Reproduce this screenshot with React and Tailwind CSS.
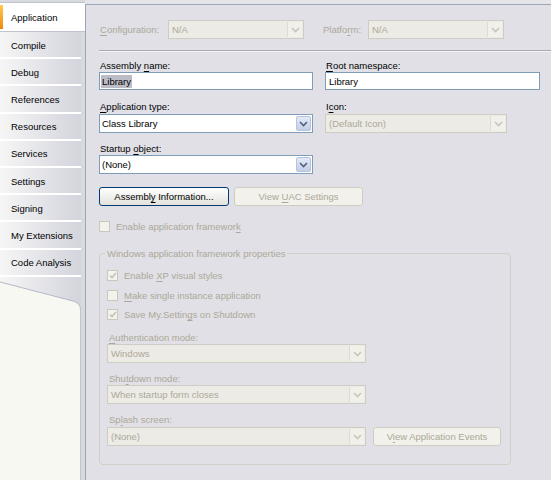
import React from 'react'

const tabs = ['Compile', 'Debug', 'References', 'Resources', 'Services', 'Settings', 'Signing', 'My Extensions', 'Code Analysis']

// text with one underlined mnemonic letter
function Mn({ text, at }) {
  if (at == null) return <>{text}</>
  return (
    <>
      {text.slice(0, at)}
      <span className="underline underline-offset-[2px]">{text[at]}</span>
      {text.slice(at + 1)}
    </>
  )
}

function Chevron({ color }) {
  return (
    <svg width="9" height="6" viewBox="0 0 9 6">
      <polyline points="1,1 4.5,4.5 8,1" fill="none" stroke={color} strokeWidth="1.6" />
    </svg>
  )
}

function Combo({ value, disabled, className = '' }) {
  if (disabled) {
    return (
      <div className={`h-[19px] flex items-center border border-[#cfcdc2] bg-[#ecebe5] ${className}`}>
        <span className="flex-1 pl-[3px] text-[#aca899] truncate">{value}</span>
        <div className="w-[15px] h-[15px] mr-px flex items-center justify-center bg-[#f1f0ea] border-l border-[#dddcd3]">
          <Chevron color="#c8c6bb" />
        </div>
      </div>
    )
  }
  return (
    <div className={`h-[19px] flex items-center border border-[#7f9db9] bg-white ${className}`}>
      <span className="flex-1 pl-[2px] text-black truncate">{value}</span>
      <div className="w-[15px] h-[15px] mr-px flex items-center justify-center rounded-[2px] border border-[#b5c3de] bg-gradient-to-b from-[#e3e9f6] to-[#c4cfe4]">
        <Chevron color="#4d6185" />
      </div>
    </div>
  )
}

function TextBox({ value, selected, className = '' }) {
  return (
    <div className={`h-[18px] flex items-center border border-[#7f9db9] bg-white pl-px ${className}`}>
      <span className={selected ? 'bg-[#bcbcc6] px-px py-px' : 'pl-[2px]'}>{value}</span>
    </div>
  )
}

function Button({ children, disabled, className = '' }) {
  if (disabled) {
    return (
      <div className={`h-[19px] flex items-center justify-center rounded-[3px] border border-[#cfcdc2] bg-[#f2f1eb] text-[#aca899] ${className}`}>
        <span>{children}</span>
      </div>
    )
  }
  return (
    <div className={`h-[19px] flex items-center justify-center rounded-[3px] border border-[#003c74] bg-gradient-to-b from-white to-[#e3e2dc] text-black ${className}`}>
      <span>{children}</span>
    </div>
  )
}

function Check({ checked, children, className = '' }) {
  return (
    <div className={`flex items-center gap-[6px] text-[#aca899] ${className}`}>
      <div className="w-[11px] h-[11px] border border-[#cac8bb] bg-[#f3f2ec] flex items-center justify-center">
        {checked && (
          <svg width="8" height="7" viewBox="0 0 8 7">
            <polyline points="1,3.5 3,5.5 7,1" fill="none" stroke="#c4c2b6" strokeWidth="1.6" />
          </svg>
        )}
      </div>
      <span>{children}</span>
    </div>
  )
}

export default function App() {
  return (
    <div className="w-[551px] h-[480px] flex overflow-hidden bg-[#e4e4e9] text-[9.5px] leading-[11px] text-black whitespace-nowrap font-['Liberation_Sans',Arial,sans-serif]">
      {/* left tab strip */}
      <div className="w-[85px] flex flex-col pt-[2px] bg-[#d9d9e0]">
        <div className="h-[30px] w-[85px] flex items-center bg-white border-t border-b border-[#c0c4cc] relative">
          <div className="absolute left-0 top-[2px] bottom-[2px] w-[3px] bg-gradient-to-b from-[#ffc94d] to-[#ee8a00]" />
          <span className="pl-[11px]">Application</span>
        </div>
        {tabs.map((t) => (
          <div
            key={t}
            className="h-[27.2px] w-[81px] flex items-center border-b-2 border-white bg-gradient-to-r from-[#f6f6f6] to-[#d3d4dc]"
          >
            <span className="pl-[11px] pt-px">{t}</span>
          </div>
        ))}
        <svg width="81" height="32" viewBox="0 0 81 32" className="block shrink-0">
          <defs>
            <linearGradient id="tabg" x1="0" x2="1" y1="0" y2="0">
              <stop offset="0" stopColor="#f6f6f6" />
              <stop offset="1" stopColor="#d3d4dc" />
            </linearGradient>
          </defs>
          <rect x="0" y="0" width="81" height="32" fill="#f8f8f3" />
          <path d="M0 0 H81 V32 Q80 26 73 24 L0 5 Z" fill="url(#tabg)" />
          <path d="M0 5 L73 24 Q80 26 80.5 32" fill="none" stroke="#b4b8c6" strokeWidth="1" />
        </svg>
        <div className="flex-1 w-[81px] bg-[#f8f8f3] border-r border-[#c4c4c8]" />
      </div>

      {/* property page */}
      <div className="flex-1 mt-[4px] border-t border-l border-[#9aa7ba] bg-[#e1e0e6] pl-[13px] flex flex-col">
        <div className="flex items-center mt-[15px] text-[#aca899]">
          <span className="w-[69px] pl-px"><Mn text="Configuration:" at={0} /></span>
          <Combo value="N/A" disabled className="w-[136px]" />
          <span className="ml-[18px] w-[46px] pl-px"><Mn text="Platform:" at={6} /></span>
          <Combo value="N/A" disabled className="w-[136px]" />
        </div>

        <div className="mt-[11px] h-[2px] border-t border-[#a9a9b3] border-b border-b-[#f4f4f6]" />

        <div className="flex mt-[8px] gap-[12px]">
          <div className="w-[214px] flex flex-col">
            <span className="pl-px mb-px">Assembly <Mn text="name:" at={0} /></span>
            <TextBox value="Library" selected />
          </div>
          <div className="w-[215px] flex flex-col">
            <span className="pl-px mb-px"><Mn text="Root namespace:" at={0} /></span>
            <TextBox value="Library" />
          </div>
        </div>

        <div className="flex mt-[11px] gap-[12px]">
          <div className="w-[214px] flex flex-col">
            <span className="pl-px mb-[2px]"><Mn text="Application type:" at={0} /></span>
            <Combo value="Class Library" />
          </div>
          <div className="w-[182px] flex flex-col">
            <span className="pl-px mb-[2px]"><Mn text="Icon:" at={1} /></span>
            <Combo value="(Default Icon)" disabled />
          </div>
        </div>

        <div className="w-[214px] flex flex-col mt-[10px]">
          <span className="pl-px mb-px">Startup <Mn text="object:" at={0} /></span>
          <Combo value="(None)" />
        </div>

        <div className="flex mt-[13px] gap-[5px]">
          <Button className="w-[130px]">Assembl<Mn text="y Information..." at={0} /></Button>
          <Button disabled className="w-[129px]">View <Mn text="UAC Settings" at={0} /></Button>
        </div>

        <Check className="mt-[15px]"><Mn text="Enable application framework" at={27} /></Check>

        <div className="relative mt-[21px] w-[412px] h-[212px] border border-[#d0d0c8] rounded-[4px] pl-[7px] pt-[16px] flex flex-col">
          <span className="absolute -top-[6px] left-[5px] px-[2px] bg-[#e1e0e6] text-[#aca899]">
            Windows application framework properties
          </span>
          <Check checked><Mn text="Enable XP visual styles" at={7} /></Check>
          <Check className="mt-[9px]"><Mn text="Make single instance application" at={0} /></Check>
          <Check checked className="mt-[8px]">Save My.Settin<Mn text="gs on Shutdown" at={0} /></Check>

          <span className="mt-[12px] mb-px pl-[2px] text-[#aca899]"><Mn text="Authentication mode:" at={0} /></span>
          <Combo value="Windows" disabled className="w-[259px]" />

          <span className="mt-[10px] mb-px pl-[2px] text-[#aca899]"><Mn text="Shutdown mode:" at={3} /></span>
          <Combo value="When startup form closes" disabled className="w-[259px]" />

          <span className="mt-[10px] mb-[2px] pl-[2px] text-[#aca899]"><Mn text="Splash screen:" at={2} /></span>
          <div className="flex gap-[7px]">
            <Combo value="(None)" disabled className="w-[259px]" />
            <Button disabled className="w-[128px]">V<Mn text="iew Application Events" at={0} /></Button>
          </div>
        </div>
      </div>
    </div>
  )
}
